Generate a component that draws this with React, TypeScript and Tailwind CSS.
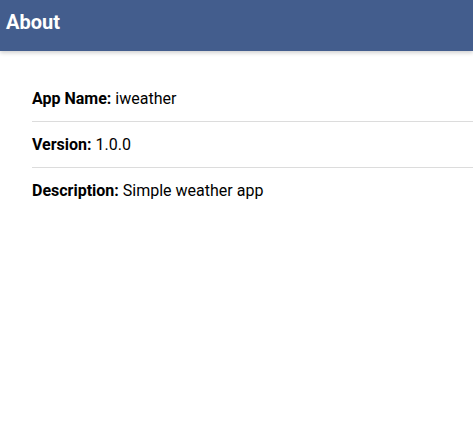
const rows = [
  { label: 'App Name:', value: 'iweather' },
  { label: 'Version:', value: '1.0.0' },
  { label: 'Description:', value: 'Simple weather app' },
]

export default function App() {
  return (
    <div className="min-h-screen bg-white font-['Roboto',sans-serif]">
      <header className="relative z-10 h-[51px] bg-[#435d8d] px-[6px] pt-[11px] shadow-[0_2px_4px_rgba(0,0,0,0.18)]">
        <h1 className="text-[20px] font-bold leading-[23px] text-white">About</h1>
      </header>
      <ul className="pl-8 pt-[25px]">
        {rows.map((row, i) => (
          <li
            key={row.label}
            className={
              i < rows.length - 1
                ? 'border-b border-[#dcdcdc] py-3 text-[16px] leading-[21px] text-black'
                : 'py-3 text-[16px] leading-[21px] text-black'
            }
          >
            <span className="font-bold">{row.label}</span> {row.value}
          </li>
        ))}
      </ul>
    </div>
  )
}
